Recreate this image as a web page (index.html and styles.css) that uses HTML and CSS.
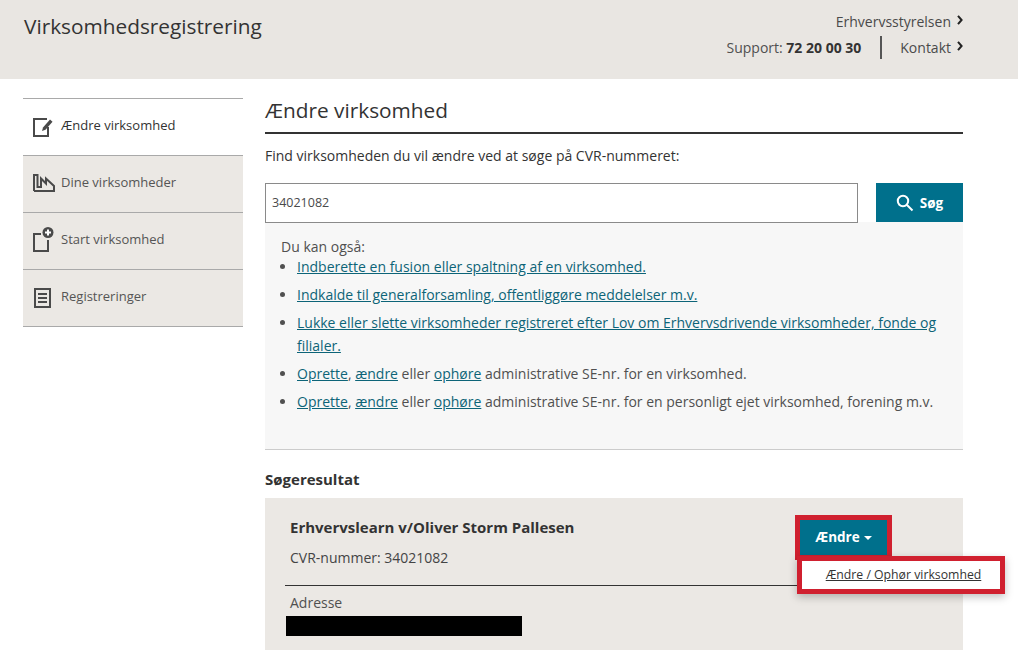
FILE: index.html
```html
<!DOCTYPE html>
<html lang="da">
<head>
<meta charset="utf-8">
<title>Virksomhedsregistrering</title>
<link rel="stylesheet" href="styles.css">
</head>
<body>
<header class="topbar">
  <div class="brand">Virksomhedsregistrering</div>
  <div class="toplinks">
    <div class="toprow"><a class="toplink">Erhvervsstyrelsen</a><svg class="chev" viewBox="0 0 6 10"><path d="M1 .8 4.600 5 1 9.200" /></svg></div>
    <div class="toprow second">
      <span class="support">Support: <b>72 20 00 30</b></span>
      <span class="divider"></span>
      <a class="toplink">Kontakt</a><svg class="chev" viewBox="0 0 6 10"><path d="M1 .8 4.600 5 1 9.200" /></svg>
    </div>
  </div>
</header>
<div class="page">
  <nav class="sidenav">
    <a class="navitem active">
      <svg class="navicon" viewBox="0 0 20 20"><path class="ln" d="M14 2H1v17h14V10" /><path class="fl" d="M9 14l1-3.500 7-8 2.500 2.200-7 8z" /></svg>
      <span>Ændre virksomhed</span>
    </a>
    <a class="navitem">
      <svg class="navicon wide" viewBox="0 0 22 18"><path class="ln" d="M1 17V1h3.500v12H8V4.500l5 5V4.500L21 12v5H1" /></svg>
      <span>Dine virksomheder</span>
    </a>
    <a class="navitem">
      <svg class="navicon tall" viewBox="0 0 22 25"><path class="ln" d="M8 7H1v17h14V13" /><circle class="fl" cx="15" cy="5.500" r="5.500" /><path class="plus" d="M15 2.500v6M12 5.500h6" /></svg>
      <span>Start virksomhed</span>
    </a>
    <a class="navitem">
      <svg class="navicon" viewBox="0 0 20 20"><path class="ln" d="M2 1h15v18H2zM5 6h9M5 10h9M5 14h9" /></svg>
      <span>Registreringer</span>
    </a>
  </nav>
  <main class="content">
    <h1 class="title">Ændre virksomhed</h1>
    <p class="lead">Find virksomheden du vil ændre ved at søge på CVR-nummeret:</p>
    <div class="searchrow">
      <input class="searchinput" type="text" value="34021082">
      <button class="searchbtn" type="button">
        <svg class="searchicon" viewBox="0 0 18 18"><circle cx="7" cy="7" r="5.200" /><path d="M11 11l5.500 5.500" /></svg>
        Søg
      </button>
    </div>
    <section class="also">
      <div class="alsohead">Du kan også:</div>
      <ul class="alsolist">
        <li><a>Indberette en fusion eller spaltning af en virksomhed.</a></li>
        <li><a>Indkalde til generalforsamling, offentliggøre meddelelser m.v.</a></li>
        <li><a>Lukke eller slette virksomheder registreret efter Lov om Erhvervsdrivende virksomheder, fonde og filialer.</a></li>
        <li><a>Oprette</a>, <a>ændre</a> eller <a>ophøre</a> administrative SE-nr. for en virksomhed.</li>
        <li><a>Oprette</a>, <a>ændre</a> eller <a>ophøre</a> administrative SE-nr. for en personligt ejet virksomhed, forening m.v.</li>
      </ul>
    </section>
    <h2 class="resulthead">Søgeresultat</h2>
    <section class="result">
      <div class="resulttop">
        <div class="resultinfo">
          <div class="company">Erhvervslearn v/Oliver Storm Pallesen</div>
          <div class="cvr">CVR-nummer: 34021082</div>
        </div>
        <div class="menuwrap">
          <button class="changebtn" type="button">Ændre<span class="caret"></span></button>
          <div class="menu"><a class="menulink">Ændre / Ophør virksomhed</a></div>
        </div>
      </div>
      <div class="address">
        <div class="addrlabel">Adresse</div>
        <div class="redacted"></div>
      </div>
    </section>
  </main>
</div>
</body>
</html>
```
FILE: styles.css
```css
* { box-sizing: border-box; }
html, body { margin: 0; height: 650px; overflow: hidden; }
body { font-family: "Open Sans", "Liberation Sans", sans-serif; font-size: 14px; color: #505050; background: #fff; }
a { color: inherit; }

.topbar { height: 79px; background: #e9e6e2; display: flex; justify-content: space-between; padding: 0 55px 0 24px; }
.brand { font-size: 20.800px; line-height: 27px; margin-top: 13px; color: #333; }
.toplinks { display: flex; flex-direction: column; align-items: flex-end; padding-top: 11px; }
.toprow { display: flex; align-items: center; height: 20px; }
.toprow.second { height: 26px; margin-top: 3px; }
.toplink { color: #4a4a4a; }
.chev { width: 6px; height: 10px; margin-left: 6px; margin-bottom: 3px; fill: none; stroke: #222; stroke-width: 2; }
.support { margin-right: 1px; }
.support b { color: #333; font-weight: 700; }
.divider { width: 2px; height: 23px; background: #555; margin: 0 18px; }

.page { display: flex; padding: 19px 55px 0 23px; gap: 22px; }
.sidenav { width: 220px; flex: none; border-bottom: 1px solid #a9a9a9; align-self: flex-start; font-size: 13px; }
.navitem { display: flex; align-items: center; height: 57px; border-top: 1px solid #a9a9a9; background: #ebe8e4; padding: 0 0 4px 10px; color: #555; }
.navitem.active { background: #fff; color: #333; }
.navicon { width: 20px; height: 20px; margin-right: 8px; flex: none; position: relative; top: 2px; }
.navicon.tall { width: 22px; height: 25px; margin-right: 6px; top: 0; }
.navicon.wide { width: 22px; height: 18px; margin-right: 6px; top: 1px; }
.ln { fill: none; stroke: #4a4a4a; stroke-width: 2; }
.fl { fill: #4a4a4a; }
.plus { fill: none; stroke: #fff; stroke-width: 2; }

.content { width: 698px; flex: none; }
.title { font-size: 20.800px; font-weight: 400; line-height: 25px; color: #333; margin: 0; height: 36px; border-bottom: 2px solid #333; }
.lead { margin: 12px 0 0; line-height: 20px; color: #333; }
.searchrow { display: flex; justify-content: space-between; margin-top: 17px; }
.searchinput { width: 593px; height: 40px; border: 1px solid #8a8a8a; padding: 0 6px 2px; font: 12.500px "Open Sans", sans-serif; color: #4a4a4a; }
.searchbtn { width: 87px; height: 39px; border: 0; background: #00708c; color: #fff; font: 700 13.500px "Open Sans", sans-serif; display: flex; align-items: center; justify-content: center; gap: 6px; padding: 0; }
.searchicon { width: 18px; height: 18px; fill: none; stroke: #fff; stroke-width: 2; }

.also { margin-top: -1px; height: 228px; background: #f7f7f7; border-bottom: 1px solid #ccc; padding: 16px 16px 0; }
.alsohead { line-height: 18px; }
.alsolist { margin: -1px 0 0; padding: 0 0 0 16px; }
.alsolist li { line-height: 23px; padding-bottom: 5px; }
.alsolist a { color: #0d6478; text-decoration: underline; }

.resulthead { font-size: 15px; font-weight: 700; line-height: 20px; color: #333; margin: 19px 0 0; }
.result { margin-top: 9px; background: #ebe8e4; height: 160px; padding: 0 0 0 20px; }
.resulttop { display: flex; justify-content: space-between; height: 88px; border-bottom: 1px solid #333; }
.resultinfo { padding: 19px 0 0 5px; }
.company { font-size: 15px; font-weight: 700; line-height: 20px; color: #333; }
.cvr { margin-top: 11px; line-height: 20px; color: #444; }
.menuwrap { position: relative; margin-right: 76px; margin-top: 22px; }
.changebtn { width: 87px; height: 35px; border: 0; background: #00708c; color: #fff; font: 700 13.500px "Open Sans", sans-serif; padding: 0 0 2px; outline: 5px solid #d0202f; }
.caret { display: inline-block; margin-left: 4px; vertical-align: middle; border-left: 4px solid transparent; border-right: 4px solid transparent; border-top: 4px solid #fff; }
.menu { position: absolute; top: 36px; left: -3px; width: 208px; height: 38px; background: #fff; border: 5px solid #d0202f; box-shadow: 0 3px 8px rgba(0,0,0,.25); padding-left: 5px; text-align: center; font-size: 12.250px; line-height: 28px; color: #333; white-space: nowrap; }
.menulink { text-decoration: underline; }
.address { padding: 7px 0 0 5px; }
.addrlabel { line-height: 20px; }
.redacted { width: 236px; height: 20px; background: #000; margin: 3px 0 0 -4px; }
```
